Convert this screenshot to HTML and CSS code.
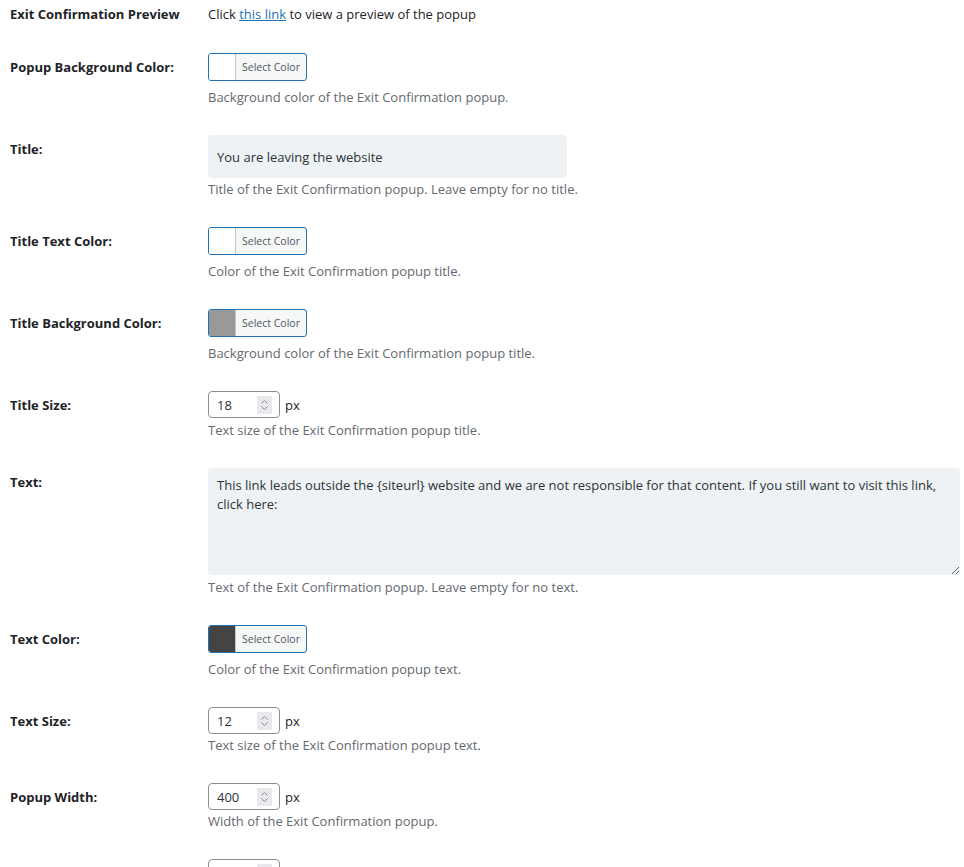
FILE: index.html
```html
<!DOCTYPE html>
<html lang="en">
<head>
<meta charset="utf-8">
<title>Exit Confirmation Settings</title>
<link rel="stylesheet" href="styles.css">
</head>
<body>
<div class="form-table">
  <div class="row row-first">
    <div class="th">Exit Confirmation Preview</div>
    <div class="td"><p class="plain">Click <a href="#">this link</a> to view a preview of the popup</p></div>
  </div>

  <div class="row">
    <div class="th">Popup Background Color:</div>
    <div class="td">
      <button class="picker" type="button"><span class="swatch sw-white"></span><span class="picker-text">Select Color</span></button>
      <p class="desc">Background color of the Exit Confirmation popup.</p>
    </div>
  </div>

  <div class="row">
    <div class="th">Title:</div>
    <div class="td">
      <input class="text-input" type="text" value="You are leaving the website">
      <p class="desc desc-tight">Title of the Exit Confirmation popup. Leave empty for no title.</p>
    </div>
  </div>

  <div class="row">
    <div class="th">Title Text Color:</div>
    <div class="td">
      <button class="picker" type="button"><span class="swatch sw-white"></span><span class="picker-text">Select Color</span></button>
      <p class="desc">Color of the Exit Confirmation popup title.</p>
    </div>
  </div>

  <div class="row">
    <div class="th">Title Background Color:</div>
    <div class="td">
      <button class="picker" type="button"><span class="swatch sw-grey"></span><span class="picker-text">Select Color</span></button>
      <p class="desc">Background color of the Exit Confirmation popup title.</p>
    </div>
  </div>

  <div class="row">
    <div class="th">Title Size:</div>
    <div class="td">
      <div class="num-line">
        <div class="num-box"><input class="num-input" type="text" value="18"><span class="spin"><svg width="9" height="12" viewBox="0 0 9 12"><path d="M1.5 4.5 L4.5 1.5 L7.5 4.5 M1.5 7.5 L4.5 10.5 L7.5 7.5" fill="none" stroke="#8a8a8a" stroke-width="1"/></svg></span></div>
        <span class="unit">px</span>
      </div>
      <p class="desc">Text size of the Exit Confirmation popup title.</p>
    </div>
  </div>

  <div class="row">
    <div class="th">Text:</div>
    <div class="td">
      <textarea class="textarea">This link leads outside the {siteurl} website and we are not responsible for that content. If you still want to visit this link, click here:</textarea>
      <p class="desc">Text of the Exit Confirmation popup. Leave empty for no text.</p>
    </div>
  </div>

  <div class="row">
    <div class="th">Text Color:</div>
    <div class="td">
      <button class="picker" type="button"><span class="swatch sw-dark"></span><span class="picker-text">Select Color</span></button>
      <p class="desc">Color of the Exit Confirmation popup text.</p>
    </div>
  </div>

  <div class="row">
    <div class="th">Text Size:</div>
    <div class="td">
      <div class="num-line">
        <div class="num-box"><input class="num-input" type="text" value="12"><span class="spin"><svg width="9" height="12" viewBox="0 0 9 12"><path d="M1.5 4.5 L4.5 1.5 L7.5 4.5 M1.5 7.5 L4.5 10.5 L7.5 7.5" fill="none" stroke="#8a8a8a" stroke-width="1"/></svg></span></div>
        <span class="unit">px</span>
      </div>
      <p class="desc desc-tight">Text size of the Exit Confirmation popup text.</p>
    </div>
  </div>

  <div class="row">
    <div class="th">Popup Width:</div>
    <div class="td">
      <div class="num-line">
        <div class="num-box"><input class="num-input" type="text" value="400"><span class="spin"><svg width="9" height="12" viewBox="0 0 9 12"><path d="M1.5 4.5 L4.5 1.5 L7.5 4.5 M1.5 7.5 L4.5 10.5 L7.5 7.5" fill="none" stroke="#8a8a8a" stroke-width="1"/></svg></span></div>
        <span class="unit">px</span>
      </div>
      <p class="desc desc-tight">Width of the Exit Confirmation popup.</p>
    </div>
  </div>

  <div class="row">
    <div class="th"></div>
    <div class="td">
      <div class="num-line">
        <div class="num-box"><input class="num-input" type="text" value=""><span class="spin"><svg width="9" height="12" viewBox="0 0 9 12"><path d="M1.5 4.5 L4.5 1.5 L7.5 4.5 M1.5 7.5 L4.5 10.5 L7.5 7.5" fill="none" stroke="#8a8a8a" stroke-width="1"/></svg></span></div>
      </div>
    </div>
  </div>
</div>
</body>
</html>
```
FILE: styles.css
```css
html, body {
  margin: 0;
  padding: 0;
  background: #ffffff;
}
body {
  font-family: "Open Sans", "Liberation Sans", sans-serif;
  font-size: 13px;
  color: #1d2327;
  overflow: hidden;
}
.form-table {
  padding-left: 10px;
}
.row {
  display: grid;
  grid-template-columns: 198px 1fr;
}
.th {
  font-weight: 700;
  line-height: 1.3;
  padding-top: 21px;
  color: #1d2327;
}
.td {
  padding: 15px 0 13px 0;
}
.row-first .th {
  padding-top: 6px;
}
.row-first .td {
  padding-top: 5px;
  padding-bottom: 14px;
}
.plain {
  margin: 0;
  line-height: 19px;
  color: #1d2327;
}
.plain a {
  color: #2271b1;
}
.desc {
  margin: 3px 0 0 0;
  line-height: 19px;
  color: #646970;
}
.desc-tight {
  margin-top: 2px;
}
.picker {
  display: flex;
  width: 99px;
  height: 28px;
  padding: 0;
  margin: 0 0 7px 0;
  border: 1px solid #2271b1;
  border-radius: 3px;
  background: #f6f7f7;
  overflow: hidden;
  font-family: inherit;
  cursor: pointer;
}
.swatch {
  width: 26px;
  height: 100%;
  border-right: 1px solid #c3c4c7;
  flex: none;
}
.sw-white { background: #ffffff; }
.sw-grey { background: #999999; }
.sw-dark { background: #444444; }
.picker-text {
  flex: 1;
  font-size: 10.5px;
  line-height: 26px;
  color: #50575e;
  text-align: center;
}
.text-input {
  display: block;
  box-sizing: border-box;
  width: 359px;
  height: 43px;
  margin: 0;
  padding: 0 9px;
  border: none;
  border-radius: 4px;
  background: #eef2f5;
  font-family: inherit;
  font-size: 13px;
  color: #2c3338;
}
.textarea {
  display: block;
  box-sizing: border-box;
  width: 752px;
  height: 107px;
  margin: 0;
  padding: 8px 9px;
  border: none;
  border-radius: 4px;
  background: #eef2f5;
  font-family: inherit;
  font-size: 13px;
  line-height: 19px;
  color: #2c3338;
  resize: vertical;
}
.num-line {
  display: flex;
  align-items: center;
  gap: 5px;
}
.num-box {
  display: flex;
  align-items: center;
  box-sizing: border-box;
  width: 72px;
  height: 27px;
  border: 1px solid #8c8f94;
  border-radius: 4px;
  background: #ffffff;
  padding: 0 7px 0 8px;
}
.num-input {
  width: 36px;
  flex: 1;
  min-width: 0;
  border: none;
  padding: 0;
  margin: 0;
  background: transparent;
  font-family: inherit;
  font-size: 13px;
  color: #2c3338;
  outline: none;
}
.spin {
  display: flex;
  align-items: center;
  justify-content: center;
  width: 15px;
  height: 18px;
  background: #e9e9ed;
  flex: none;
}
.unit {
  color: #1d2327;
}
```
